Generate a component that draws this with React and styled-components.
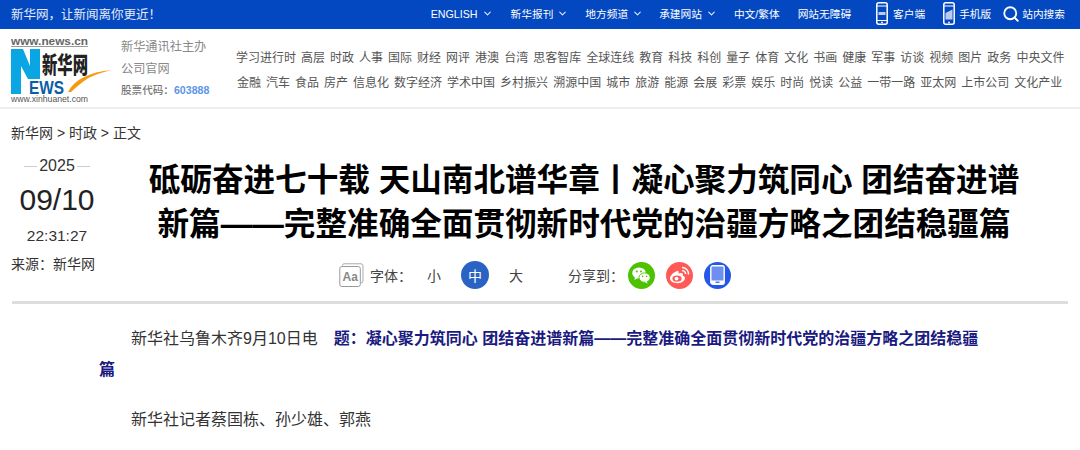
import React from 'react';
import styled, { createGlobalStyle } from 'styled-components';
import { ChevronDown, Search } from 'lucide-react';

const FONT = '"Liberation Sans", "Noto Sans CJK SC", sans-serif';

const GlobalStyle = createGlobalStyle`
  html, body {
    margin: 0;
    padding: 0;
    background: #fff;
    font-family: ${FONT};
    overflow: hidden;
  }
  * { box-sizing: border-box; }
`;

const Page = styled.div`
  width: 1080px;
  height: 450px;
  overflow: hidden;
`;

const TopBar = styled.div`
  height: 29px;
  background: #0348c1;
  color: #fff;
  display: flex;
  align-items: center;
  justify-content: space-between;
  padding: 0 15px 2px 11px;
`;

const Slogan = styled.div`
  font-size: 12.5px;
  opacity: 0.9;
`;

const TopNav = styled.div`
  display: flex;
  align-items: center;
  font-size: 10.7px;
`;

const TopItem = styled.span`
  display: flex;
  align-items: center;
  gap: ${({ $inner }) => ($inner === undefined ? 4 : $inner)}px;
  margin-left: ${({ $gap }) => ($gap === undefined ? 17 : $gap)}px;
  white-space: nowrap;
`;

const Header = styled.div`
  height: 80px;
  border-bottom: 2px solid #eee;
  display: flex;
  padding: 7px 0 0 11px;
`;

const Org = styled.div`
  width: 115px;
  flex: none;
  margin-left: 8px;
  padding-top: 1px;
  font-size: 12.2px;
  color: #888;
  line-height: 21.5px;
`;

const StockRow = styled.div`
  font-size: 10.6px;
  white-space: nowrap;
`;

const StockCode = styled.b`
  color: #5b95e6;
`;

const StockLabel = styled.span`
  font-weight: 500;
  color: #777;
`;

const Channels = styled.div`
  padding-top: 10px;
  font-size: 12px;
  color: #555;
  line-height: 25px;
`;

const ChannelRow = styled.div`
  display: flex;
  gap: 5px;
  white-space: nowrap;
  margin-left: ${({ $left }) => $left}px;
`;

const Crumb = styled.div`
  padding: 15px 0 0 11px;
  font-size: 14px;
  line-height: 18px;
  color: #333;
`;

const ArticleHead = styled.div`
  display: flex;
  margin: 0 12px;
  height: 162px;
  border-bottom: 3px solid #ddd;
`;

const DateCol = styled.div`
  width: 92px;
  flex: none;
  color: #333;
  padding-top: 14px;
  margin-left: -1px;
  display: flex;
  flex-direction: column;
`;

const Year = styled.div`
  font-size: 16px;
  line-height: 20px;
  text-align: center;
  display: flex;
  justify-content: center;
  align-items: center;
  gap: 2px;
  &::before, &::after {
    content: '';
    width: 13px;
    height: 1px;
    background: #ccc;
  }
`;

const Day = styled.div`
  font-size: 30px;
  line-height: 38px;
  margin-top: 5px;
  text-align: center;
  color: #222;
`;

const Clock = styled.div`
  font-size: 15.5px;
  line-height: 18px;
  margin-top: 8px;
  text-align: center;
`;

const Source = styled.div`
  font-size: 14px;
  line-height: 18px;
  margin-top: 10px;
`;

const TitleCol = styled.div`
  flex: 1;
  padding-top: 16px;
`;

const Title = styled.h1`
  margin: 0;
  padding-right: 3px;
  font-size: 31.6px;
  line-height: 44px;
  font-weight: 700;
  color: #000;
  text-align: center;
  white-space: nowrap;
`;

const Tools = styled.div`
  display: flex;
  align-items: center;
  margin: 15px 0 0 236px;
  font-size: 14px;
  color: #444;
`;

const ToolLabel = styled.span`
  margin-left: ${({ $gap }) => $gap}px;
`;

const SizeBtn = styled.span`
  width: 28px;
  height: 28px;
  border-radius: 50%;
  display: flex;
  align-items: center;
  justify-content: center;
  margin-left: ${({ $gap }) => $gap}px;
  background: ${({ $on }) => ($on ? '#2a63c4' : 'transparent')};
  color: ${({ $on }) => ($on ? '#fff' : '#444')};
`;

const ShareIcon = styled.span`
  width: 27px;
  height: 27px;
  border-radius: 50%;
  background: ${({ $bg }) => $bg};
  display: flex;
  align-items: center;
  justify-content: center;
  margin-left: ${({ $gap }) => $gap}px;
`;

const Body = styled.div`
  padding: 19px 0 0 99px;
  font-size: 16px;
  line-height: 31px;
  color: #333;
  width: 985px;
`;

const Para = styled.p`
  margin: 0 0 19px;
  text-indent: 32px;
`;

const Lead = styled.b`
  color: #1a1a80;
  margin-left: 16px;
`;

const ClientIcon = () => (
  <svg width="12" height="23" viewBox="0 0 12 23">
    <rect x="0.8" y="0.8" width="10.4" height="21.4" rx="2" fill="none" stroke="#fff" strokeWidth="1.5" />
    <rect x="1" y="3.5" width="10" height="1" fill="#fff" />
    <rect x="1" y="18" width="10" height="1" fill="#fff" />
    <rect x="2.5" y="10" width="7" height="3" fill="#b9ccef" />
    <circle cx="6" cy="20.4" r="0.9" fill="#fff" />
  </svg>
);

const MobileIcon = () => (
  <svg width="12" height="23" viewBox="0 0 12 23">
    <rect x="0.8" y="0.8" width="10.4" height="21.4" rx="2" fill="none" stroke="#fff" strokeWidth="1.5" />
    <rect x="1" y="3.5" width="10" height="1" fill="#fff" />
    <path d="M2.5 11 L9.5 7.5 V17.5 H2.5 Z" fill="#b9ccef" />
    <circle cx="6" cy="20.4" r="0.9" fill="#fff" />
  </svg>
);

const AaIcon = () => (
  <svg width="25" height="24" viewBox="0 0 25 24">
    <path d="M3.5 2.5 Q3.5 0.8 5 0.8 H22 Q24 0.8 24 3 V18 Q24 20 22 20" fill="none" stroke="#aaa" />
    <rect x="0.8" y="3.5" width="20.5" height="20" rx="2" fill="#fff" stroke="#999" />
    <text x="3.5" y="18" fontSize="12" fontWeight="700" fill="#888" fontFamily="Liberation Sans">Aa</text>
  </svg>
);

const WechatIcon = () => (
  <svg width="19" height="17" viewBox="0 0 19 17">
    <ellipse cx="7" cy="6" rx="6.8" ry="5.6" fill="#fff" />
    <path d="M3 9 L2.5 13 L6.5 10.5 Z" fill="#fff" />
    <ellipse cx="12.6" cy="10.6" rx="5.6" ry="4.7" fill="#fff" stroke="#4cc200" strokeWidth="0.9" />
    <path d="M14.5 14 L15.8 16.5 L12.5 15 Z" fill="#fff" />
    <circle cx="4.8" cy="4.4" r="1" fill="#4cc200" />
    <circle cx="9" cy="4.4" r="1" fill="#4cc200" />
    <circle cx="10.6" cy="9.4" r="0.8" fill="#4cc200" />
    <circle cx="14.6" cy="9.4" r="0.8" fill="#4cc200" />
  </svg>
);

const WeiboIcon = () => (
  <svg width="21" height="18" viewBox="0 0 21 18">
    <path d="M8 5 C4 6.5 1 10 1 12.5 C1 15.5 5 17.2 8.5 17.2 C13 17.2 16 14.5 16 12 C16 10.5 14.5 10 13.8 9.7 C14.4 8.2 14 7 12 7 C11 7 10 7.4 9.5 7.7 C9.8 5.5 9.5 4.5 8 5 Z" fill="#fff" />
    <ellipse cx="8" cy="12.6" rx="4.6" ry="3.2" fill="#ff5a56" />
    <circle cx="7.5" cy="12.6" r="1.9" fill="#fff" />
    <path d="M13 1.5 A6.5 6.5 0 0 1 19.5 8.5 M13 4.6 A3.4 3.4 0 0 1 16.6 8" fill="none" stroke="#fff" strokeWidth="1.4" />
  </svg>
);

const TabletIcon = () => (
  <svg width="15" height="20" viewBox="0 0 15 20">
    <rect x="0.8" y="0.8" width="13.4" height="18.4" rx="2" fill="#6f8ff0" stroke="#fff" strokeWidth="1.4" />
    <rect x="1" y="15.5" width="13" height="3.5" fill="#fff" />
    <rect x="5.5" y="16.6" width="4" height="1.2" fill="#2458e6" />
  </svg>
);

const Logo = () => (
  <svg width="102" height="68" viewBox="0 0 102 68">
    <text x="0" y="9" fontSize="10.4" fontWeight="700" fill="#666" fontFamily="Liberation Sans" textLength="77" lengthAdjust="spacingAndGlyphs">www.news.cn</text>
    <rect x="0" y="10" width="77" height="1" fill="#999" />
    <path d="M0 13 H12 L19 30 V13 H29 V43 H17 L10 30 V58 H0 Z" fill="#0aa6e4" />
    <text x="18" y="58" fontSize="19" fontWeight="700" fill="#0a5ea8" fontFamily="Liberation Sans" textLength="35" lengthAdjust="spacingAndGlyphs">EWS</text>
    <text x="31" y="37" fontSize="23" fontWeight="900" fill="#222" fontFamily="Noto Sans CJK SC" textLength="46" lengthAdjust="spacingAndGlyphs">新华网</text>
    <path d="M57 56 C63 44 78 36 101 34 C92 36 82 39 76 43 C70 47 65 51 60 56 Z" fill="#f59a0c" />
    <text x="0" y="66" fontSize="8.4" fill="#555" fontFamily="Liberation Sans" textLength="77" lengthAdjust="spacingAndGlyphs">www.xinhuanet.com</text>
  </svg>
);

const rowOne = '学习进行时 高层 时政 人事 国际 财经 网评 港澳 台湾 思客智库 全球连线 教育 科技 科创 量子 体育 文化 书画 健康 军事 访谈 视频 图片 政务 中央文件'.split(' ');
const rowTwo = '金融 汽车 食品 房产 信息化 数字经济 学术中国 乡村振兴 溯源中国 城市 旅游 能源 会展 彩票 娱乐 时尚 悦读 公益 一带一路 亚太网 上市公司 文化产业'.split(' ');

const Chevron = () => <ChevronDown size={11} strokeWidth={2.4} color="#dfe8fa" />;

const App = () => {
  return (
    <Page>
      <GlobalStyle />
      <TopBar>
        <Slogan>新华网，让新闻离你更近！</Slogan>
        <TopNav>
          <TopItem>ENGLISH <Chevron /></TopItem>
          <TopItem $gap={18}>新华报刊 <Chevron /></TopItem>
          <TopItem>地方频道 <Chevron /></TopItem>
          <TopItem $gap={16}>承建网站 <Chevron /></TopItem>
          <TopItem $gap={17}>中文/繁体</TopItem>
          <TopItem $gap={18}>网站无障碍</TopItem>
          <TopItem $gap={25} $inner={5}><ClientIcon />客户端</TopItem>
          <TopItem $gap={18} $inner={4}><MobileIcon />手机版</TopItem>
          <TopItem $gap={11} $inner={2}><Search size={18} color="#fff" strokeWidth={2.4} />站内搜索</TopItem>
        </TopNav>
      </TopBar>

      <Header>
        <Logo />
        <Org>
          <div>新华通讯社主办</div>
          <div>公司官网</div>
          <StockRow><StockLabel>股票代码：</StockLabel><StockCode>603888</StockCode></StockRow>
        </Org>
        <Channels>
          <ChannelRow $left={0}>{rowOne.map((c) => <span key={c}>{c}</span>)}</ChannelRow>
          <ChannelRow $left={1}>{rowTwo.map((c) => <span key={c}>{c}</span>)}</ChannelRow>
        </Channels>
      </Header>

      <Crumb>新华网 &gt; 时政 &gt; 正文</Crumb>

      <ArticleHead>
        <DateCol>
          <Year>2025</Year>
          <Day>09/10</Day>
          <Clock>22:31:27</Clock>
          <Source>来源：新华网</Source>
        </DateCol>
        <TitleCol>
          <Title>
            砥砺奋进七十载 天山南北谱华章丨凝心聚力筑同心 团结奋进谱<br />
            新篇——完整准确全面贯彻新时代党的治疆方略之团结稳疆篇
          </Title>
          <Tools>
            <AaIcon />
            <ToolLabel $gap={6}>字体：</ToolLabel>
            <SizeBtn $gap={8}>小</SizeBtn>
            <SizeBtn $gap={13} $on>中</SizeBtn>
            <SizeBtn $gap={13}>大</SizeBtn>
            <ToolLabel $gap={38}>分享到：</ToolLabel>
            <ShareIcon $bg="#4cc200" $gap={4}><WechatIcon /></ShareIcon>
            <ShareIcon $bg="#ff5a56" $gap={11}><WeiboIcon /></ShareIcon>
            <ShareIcon $bg="#2458e6" $gap={11}><TabletIcon /></ShareIcon>
          </Tools>
        </TitleCol>
      </ArticleHead>

      <Body>
        <Para>
          新华社乌鲁木齐9月10日电<Lead>题：凝心聚力筑同心 团结奋进谱新篇——完整准确全面贯彻新时代党的治疆方略之团结稳疆篇</Lead>
        </Para>
        <Para>新华社记者蔡国栋、孙少雄、郭燕</Para>
      </Body>
    </Page>
  );
};

export default App;
